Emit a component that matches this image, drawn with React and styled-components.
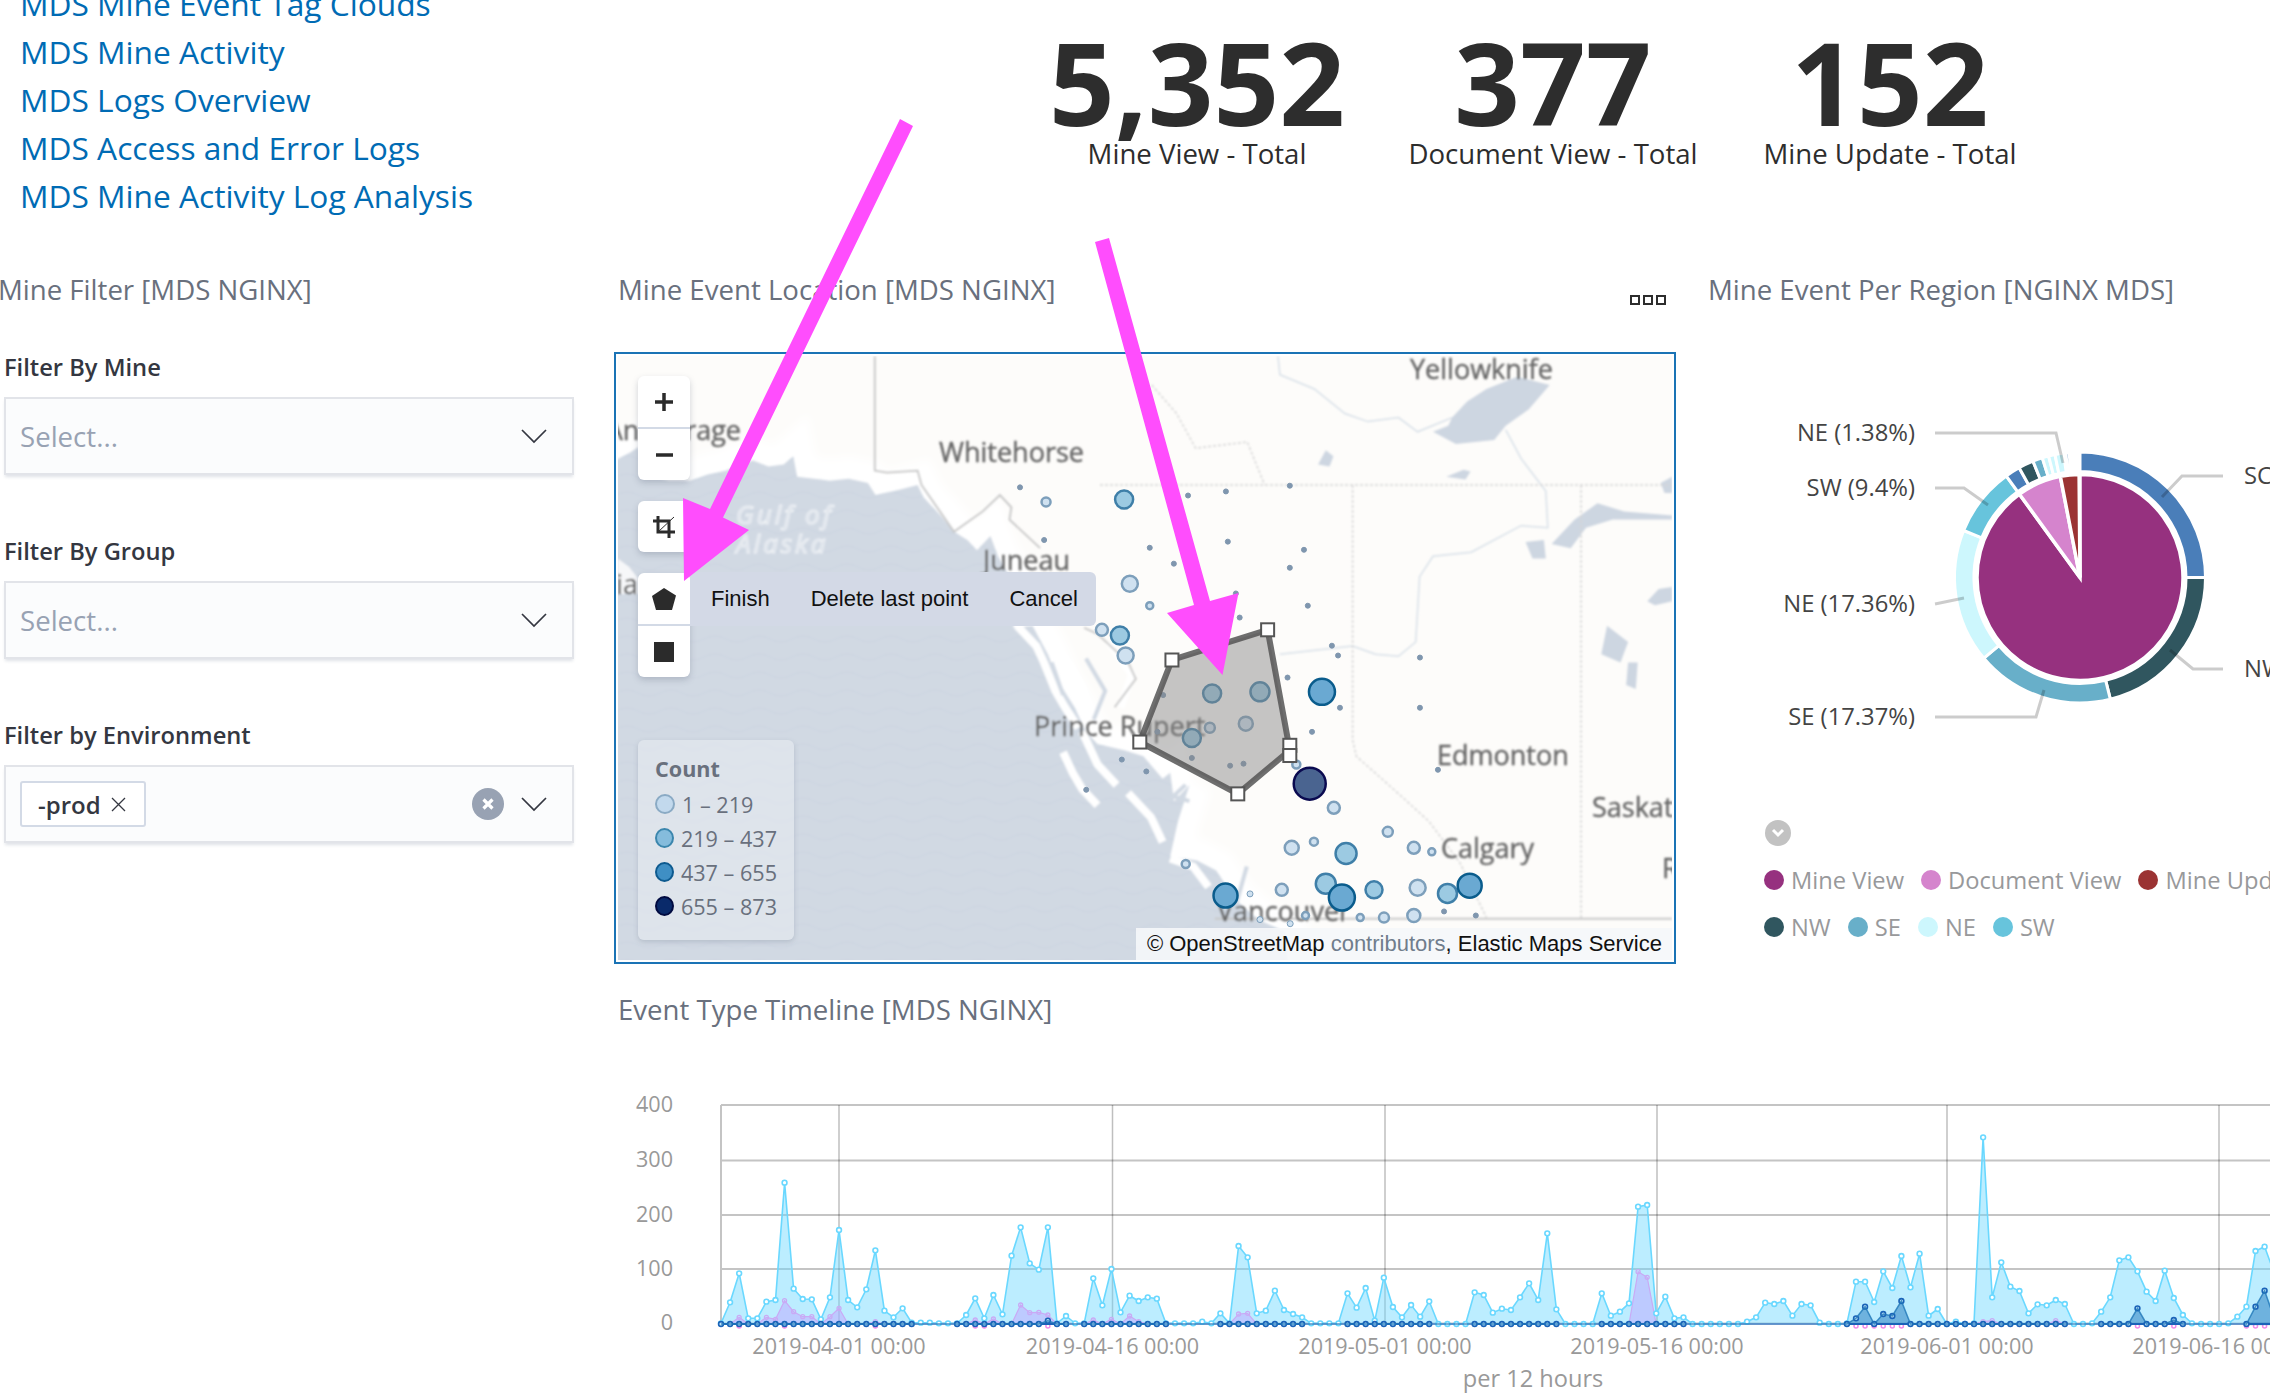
import React from 'react';
import styled, { createGlobalStyle } from 'styled-components';

const GlobalStyle = createGlobalStyle`
	html, body {
		margin: 0;
		padding: 0;
		background: #fff;
		font-family: "Open Sans", sans-serif;
	}
`;

const Page = styled.div`
	position: relative;
	width: 2270px;
	height: 1396px;
	overflow: hidden;
	background: #fff;
`;

const TopRow = styled.div`
	display: grid;
	grid-template-columns: 1020px 354px 358px 316px;
	height: 270px;
`;
const Links = styled.div`
	margin-top: -20px;
	padding-left: 20px;
`;
const DashLink = styled.a`
	display: block;
	font-size: 31.7px;
	line-height: 48px;
	color: #006bb4;
`;
const Metric = styled.div`
	padding-top: 32px;
	text-align: center;
	color: #2d2d2d;
`;
const MetricValue = styled.div`
	font-size: 115px;
	line-height: 100px;
	font-weight: 700;
`;
const MetricLabel = styled.div`
	margin-top: 1px;
	font-size: 27.6px;
	line-height: 40px;
`;

const Body = styled.div`
	display: grid;
	grid-template-columns: 614px 1656px;
`;
const PanelTitle = styled.div`
	font-size: 27.6px;
	line-height: 38px;
	color: #69707d;
	white-space: nowrap;
`;
const TitleRow = styled.div`
	display: flex;
	justify-content: space-between;
	height: 82px;
	padding-left: ${p => p.$indent || 0}px;
	padding-right: 10px;
	box-sizing: border-box;
`;
const FilterColumn = styled.div`
	padding-left: 4px;
`;
const FilterTitle = styled(PanelTitle)`
	margin-left: -6px;
	height: 82px;
`;
const FilterBlock = styled.div`
	margin-bottom: 61px;
`;
const FilterLabel = styled.div`
	margin-bottom: 15px;
	font-size: 23.7px;
	line-height: 30px;
	font-weight: 600;
	color: #343741;
`;
const SelectBox = styled.div`
	display: flex;
	align-items: center;
	width: 570px;
	height: 78px;
	padding: 0 25px 0 14px;
	box-sizing: border-box;
	background: #fbfcfd;
	border: 2px solid #e2e4e9;
	box-shadow: 0 3px 3px -1px rgba(152, 162, 179, 0.3);
`;
const Placeholder = styled.div`
	flex: 1;
	font-size: 27.6px;
	color: #98a2b3;
`;
const TagWrap = styled.div`
	flex: 1;
`;
const Tag = styled.div`
	display: inline-flex;
	align-items: center;
	gap: 10px;
	height: 46px;
	padding: 0 18px 0 16px;
	box-sizing: border-box;
	background: #fff;
	border: 2px solid #d3dae6;
	border-radius: 3px;
	font-size: 24px;
	font-weight: 600;
	color: #343741;
`;
const ClearButton = styled.div`
	display: flex;
	align-items: center;
	justify-content: center;
	width: 32px;
	height: 32px;
	margin-right: 17px;
	border-radius: 50%;
	background: #98a2b3;
`;

const MainColumn = styled.div`
	width: 1656px;
`;
const UpperPanels = styled.div`
	display: flex;
`;
const MapPanel = styled.div`
	width: 1062px;
`;
const MoreDots = styled.div`
	display: flex;
	gap: 3px;
	margin-top: 25px;
	height: 9px;
`;
const MoreDot = styled.span`
	width: 6px;
	height: 6px;
	border: 2px solid #2d2d2d;
`;
const MapFrame = styled.div`
	position: relative;
	width: 1062px;
	height: 612px;
	padding: 2px;
	box-sizing: border-box;
	border: 2px solid #1a73b5;
	background: #fff;
	overflow: hidden;
`;
const MapSvg = styled.svg`
	display: block;
	width: 1054px;
	height: 604px;
	background: #fdfcfa;
`;
const MapLabel = styled.text`
	font-family: "Open Sans", sans-serif;
	font-size: 27px;
	fill: #666;
	stroke: #666;
	stroke-width: 0.4px;
`;
const SeaLabel = styled.text`
	font-family: "Open Sans", sans-serif;
	font-size: 26px;
	font-style: italic;
	letter-spacing: 3px;
	fill: #d0d8e3;
	stroke: #eef1f5;
	stroke-width: 1.2px;
`;
const Tools = styled.div`
	position: absolute;
	top: 22px;
	left: 22px;
	display: flex;
	flex-direction: column;
	gap: 21px;
`;
const ToolGroup = styled.div`
	position: relative;
	display: flex;
	flex-direction: column;
	width: 52px;
	border-radius: 6px;
	background: #fff;
	box-shadow: 0 3px 6px rgba(100, 110, 130, 0.3);
`;
const ToolButton = styled.div`
	display: flex;
	align-items: center;
	justify-content: center;
	height: 51px;
	color: #2b2b2b;
	& + & {
		border-top: 2px solid #d3dae6;
	}
`;
const DrawActions = styled.div`
	position: absolute;
	top: -1px;
	left: 52px;
	display: flex;
	align-items: center;
	width: 406px;
	height: 54px;
	box-sizing: border-box;
	padding-left: 21px;
	gap: 41px;
	background: #d3d9e6;
	border-radius: 0 6px 6px 0;
	font-family: "Liberation Sans", Arial, sans-serif;
	font-size: 22px;
	color: #111;
	white-space: nowrap;
`;
const MapLegend = styled.div`
	position: absolute;
	left: 22px;
	bottom: 22px;
	width: 156px;
	height: 200px;
	padding: 14px 17px;
	box-sizing: border-box;
	background: rgba(226, 231, 238, 0.75);
	border-radius: 6px;
	box-shadow: 0 2px 5px rgba(100, 110, 130, 0.25);
	font-size: 21.6px;
	color: #69707d;
`;
const MapLegendTitle = styled.div`
	font-weight: 700;
	line-height: 30px;
	margin-bottom: 3px;
`;
const MapLegendRow = styled.div`
	display: flex;
	align-items: center;
	gap: 7px;
	height: 34px;
	white-space: nowrap;
`;
const MapLegendDot = styled.span`
	width: 20px;
	height: 20px;
	box-sizing: border-box;
	border-radius: 50%;
	border: 2px solid ${p => p.$line};
	background: ${p => p.$fill};
`;
const Attribution = styled.div`
	position: absolute;
	right: 2px;
	bottom: 2px;
	padding: 0 10px 0 11px;
	height: 32px;
	line-height: 32px;
	background: rgba(245, 247, 250, 0.9);
	font-family: "Liberation Sans", Arial, sans-serif;
	font-size: 22px;
	color: #111;
	white-space: nowrap;
`;
const AttributionLink = styled.span`
	color: #707d8c;
`;

const RegionPanel = styled.div`
	width: 594px;
`;
const ChartSvg = styled.svg`
	display: block;
	overflow: hidden;
`;
const ChartText = styled.text`
	font-family: "Open Sans", sans-serif;
	font-size: ${p => p.$size || 21.6}px;
	fill: ${p => p.$color || '#444'};
`;
const LegendToggle = styled.div`
	display: flex;
	align-items: center;
	justify-content: center;
	width: 26px;
	height: 26px;
	margin: 20px 0 10px 89px;
	border-radius: 50%;
	background: #c2c2c2;
`;
const LegendRow = styled.div`
	display: flex;
	align-items: center;
	gap: 17px;
	height: 47px;
	padding-left: 88px;
	white-space: nowrap;
	font-size: 23.7px;
	color: #98999b;
`;
const LegendItem = styled.div`
	display: flex;
	align-items: center;
	gap: 7px;
`;
const LegendDot = styled.span`
	width: 20px;
	height: 20px;
	border-radius: 50%;
	background: ${p => p.$color};
`;

const TimelineTitle = styled(PanelTitle)`
	margin: 26px 0 32px 4px;
`;
const TimelineSvg = styled.svg`
	display: block;
	margin-left: 4px;
`;
const ArrowLayer = styled.svg`
	position: absolute;
	top: 0;
	left: 0;
	pointer-events: none;
`;

// map shapes are read off the crops, so they go through the same scale
const fromCrop = (originX) => ([x, y]) => [originX + x / 2.613, 340 + y / 2.45];
const west = fromCrop(600);
const east = fromCrop(1100);
const line = (points, toPage = west) => points.map((p) => toPage(p).map((n) => n.toFixed(1)).join(',')).join(' ');

const WATER = '#d1d9e3';

const coast = [
	[30, 300], [60, 285], [80, 275], [100, 262], [120, 330], [180, 345], [235, 345], [280, 330], [330, 320], [365, 305], [400, 295], [440, 310],
	[480, 305], [505, 285], [515, 335], [560, 340], [600, 345], [650, 340], [700, 350], [720, 380], [760, 372], [790, 365], [830, 355], [845, 385],
	[860, 400], [890, 430], [925, 470], [960, 490], [985, 515], [1020, 480], [1040, 530], [1065, 570],
	[1090, 600], [1080, 705], [1130, 700], [1170, 770], [1200, 840], [1240, 900], [1270, 960], [1300, 990], [1370, 1005], [1420, 1020],
	[1470, 1075], [1490, 1060], [1500, 1130], [1540, 1090], [1510, 1180], [1490, 1265], [1560, 1275], [1610, 1300], [1660, 1370],
	[1720, 1420], [1790, 1450], [1800, 1560], [30, 1560],
];
const islands = [
	[[1090, 700], [1140, 750], [1160, 790], [1190, 860], [1215, 900], [1250, 950]],
	[[1200, 760], [1230, 800], [1260, 850], [1290, 930]],
	[[1210, 1010], [1235, 1060], [1260, 1100], [1300, 1140]],
	[[1490, 1270], [1550, 1290], [1590, 1340]],
	[[1330, 740], [1390, 820], [1360, 900]],
	[[1260, 960], [1300, 1040], [1350, 1090]],
	[[1380, 1110], [1440, 1170], [1470, 1230]],
];
const channels = [
	[[1270, 780], [1320, 860], [1290, 930]],
	[[1180, 790], [1210, 870]],
	[[1410, 1090], [1470, 1110], [1540, 1130]],
	[[1690, 1290], [1660, 1390]],
	[[1530, 1090], [1450, 1160]],
];
const kodiak = [[46, 535], [75, 555], [100, 585], [100, 622], [46, 622]];
const lakes = [
	[[920, 190], [960, 150], [1010, 120], [1090, 90], [1175, 110], [1120, 170], [1060, 210], [1030, 245], [930, 255], [870, 225], [910, 210]],
	[[1180, 500], [1240, 440], [1300, 400], [1370, 420], [1495, 430], [1495, 440], [1340, 440], [1270, 460], [1230, 510]],
	[[1112, 495], [1160, 490], [1165, 535], [1130, 535]],
	[[570, 305], [590, 270], [610, 285], [600, 310]],
	[[905, 335], [950, 318], [968, 322], [955, 342]],
	[[1430, 640], [1460, 610], [1495, 605], [1495, 640], [1450, 650]],
	[[1325, 700], [1380, 740], [1360, 790], [1310, 770]],
	[[1380, 790], [1405, 790], [1400, 855], [1375, 845]],
	[[1465, 350], [1495, 335], [1495, 375], [1475, 375]],
];
const rivers = [
	[[465, 40], [470, 85], [560, 120], [640, 180], [700, 200], [780, 190], [830, 225], [920, 190]],
	[[1060, 220], [1100, 290], [1165, 370], [1170, 460], [1100, 455], [970, 520], [870, 530], [835, 580], [825, 740], [780, 775], [720, 770], [660, 750], [470, 770]],
];
const provinceLines = [
	[[0, 355], [1495, 355]],
	[[660, 355], [660, 980], [670, 1020], [730, 1070], [790, 1120], [860, 1180], [940, 1280], [1010, 1415]],
	[[1257, 355], [1257, 1418]],
	[[135, 110], [200, 180], [250, 265], [385, 250], [430, 355]],
];
const alaskaBorder = [
	[718, 40], [718, 320], [750, 325], [830, 320], [840, 355], [925, 470], [1000, 420], [1045, 380], [1075, 410], [1070, 440], [1150, 510],
];
const panhandle = [[1265, 705], [1300, 720], [1380, 790], [1400, 830], [1345, 900]];

const tiny = { r: 2.5, fill: '#7f96ae', stroke: '#7f96ae' };
const pale = { fill: '#cfe1f0', stroke: '#7d9fbb' };
const mid = { fill: '#9ccae2', stroke: '#3f7fa8' };
const strong = { fill: '#6aa9d2', stroke: '#0a5c8c' };
const bubbles = [
	...[[-1306 + 1097, 361], [230, 381], [329, 371], [496, 357], [130, 509], [334, 494], [533, 514], [193, 548], [496, 558], [355, 621], [365, 680],
		[606, 749], [836, 778], [836, 901], [627, 901], [554, 960], [883, 1053], [899, 1400], [982, 1410], [-146, 490], [57, 1028], [121, 1057], [-36, 1102],
		[165, 870], [240, 1024], [340, 1043], [375, 1038], [150, 960], [490, 827], [622, 773], [543, 651]].map(([x, y]) => ({ x, y, ...tiny })),
	...[[-141, 397, 4.5], [130, 651, 3.5], [611, 1146, 6], [752, 1205, 5], [820, 1244, 6], [867, 1254, 3.5], [501, 1244, 7], [559, 1229, 4], [224, 1284, 4],
		[392, 1357, 3], [475, 1347, 6], [742, 1415, 5], [820, 1410, 6.5], [680, 1415, 3.5], [537, 1410, 3.5], [497, 1430, 3], [418, 1420, 3], [513, 1040, 4],
		[78, 597, 8], [67, 773, 8], [5, 710, 6], [287, 950, 5], [381, 940, 7], [830, 1342, 8]].map(([x, y, r]) => ({ x, y, r, ...pale })),
	...[[63, 391, 9], [52, 724, 9], [293, 866, 9], [418, 862, 9.5], [240, 975, 9], [643, 1258, 10.5], [590, 1332, 10], [716, 1347, 8.5], [908, 1356, 9.5]].map(([x, y, r]) => ({ x, y, r, ...mid })),
	...[[580, 862, 13], [328, 1361, 12], [632, 1366, 13], [966, 1337, 12]].map(([x, y, r]) => ({ x, y, r, ...strong })),
	{ x: 548, y: 1087, r: 16, fill: '#4a6490', stroke: '#0a0a50' },
];
const drawnShape = [[104, 985], [188, 784], [438, 710], [496, 1005], [360, 1112]];
const handles = [[104, 985], [188, 784], [438, 710], [496, 993], [496, 1018], [360, 1112]];

const mapLabels = [
	['Yellowknife', 1410, 379],
	['Whitehorse', 939, 462],
	['Juneau', 983, 570],
	['Prince Rupert', 1034, 736],
	['Edmonton', 1437, 765],
	['Saskatoon', 1592, 817],
	['Calgary', 1441, 858],
	['Regina', 1662, 878],
	['Vancouver', 1217, 921],
];

const ARROW_COLOR = '#ff4dfd';

const polar = (cx, cy, r, deg) => {
	const a = (deg - 90) * Math.PI / 180;
	return [cx + r * Math.cos(a), cy + r * Math.sin(a)];
};
const slice = (r0, r1, from, to) => {
	const [cx, cy] = [2080, 577.5];
	const large = to - from > 180 ? 1 : 0;
	const [ax, ay] = polar(cx, cy, r1, from);
	const [bx, by] = polar(cx, cy, r1, to);
	if (!r0) return `M${cx} ${cy} L${ax} ${ay} A${r1} ${r1} 0 ${large} 1 ${bx} ${by} Z`;
	const [dx, dy] = polar(cx, cy, r0, to);
	const [ex, ey] = polar(cx, cy, r0, from);
	return `M${ax} ${ay} A${r1} ${r1} 0 ${large} 1 ${bx} ${by} L${dx} ${dy} A${r0} ${r0} 0 ${large} 0 ${ex} ${ey} Z`;
};
const innerSlices = [
	[0, 324, '#96317f'],
	[324, 349, '#d584cd'],
	[349, 359.5, '#9b3333'],
];
const outerSlices = [
	[0, 90, '#4a7eb9'],
	[90, 166, '#30565f'],
	[166, 230, '#68afc9'],
	[230, 292, '#cdf7fd'],
	[292, 324, '#67c4dc'],
	[324, 331, '#4a7eb9'],
	[331, 338, '#30565f'],
	[338, 342.5, '#68afc9'],
	[342.5, 345.5, '#cdf7fd'],
	[345.5, 348.5, '#cdf7fd'],
	[348.5, 352.5, '#cdf7fd'],
	[353.5, 355, '#4a7eb9'],
];
const leaders = [
	{ text: 'NE (1.38%)', y: 433, points: '1935,433 2056,433 2063,463' },
	{ text: 'SW (9.4%)', y: 488, points: '1935,488 1964,488 1988,505' },
	{ text: 'NE (17.36%)', y: 604, points: '1935,604 1964,598' },
	{ text: 'SE (17.37%)', y: 717, points: '1935,717 2036,717 2044,690' },
];
const leadersRight = [
	{ text: 'SC (26.37%)', y: 476, points: '2223,476 2182,476 2162,497' },
	{ text: 'NW (20.21%)', y: 669, points: '2223,669 2193,669 2170,650' },
];

// rows on the crop, one per 12 hour bucket
const lightRows = [
	790, 727, 640, 775, 775, 725, 720, 368, 686, 717, 718, 778, 712, 510, 720, 742, 688, 571, 752, 772, 745, 788,
	788, 788, 790, 790, 790, 765, 715, 775, 705, 763, 587, 502, 610, 629, 502, 790, 768, 790, 790, 655, 736, 627,
	757, 707, 723, 712, 716, 790, 790, 790, 790, 785, 790, 760, 790, 558, 592, 760, 752, 692, 750, 762, 772, 790,
	790, 790, 790, 700, 743, 684, 782, 653, 741, 772, 735, 770, 724, 792, 792, 792, 792, 697, 705, 758, 746, 750,
	712, 670, 720, 520, 748, 792, 792, 792, 792, 700, 767, 755, 730, 440, 435, 760, 710, 775, 772, 792, 792, 792,
	792, 792, 792, 785, 772, 728, 732, 723, 767, 732, 736, 788, 792, 792, 790, 665, 665, 726, 634, 684, 588, 682,
	581, 767, 747, 792, 785, 792, 790, 232, 712, 607, 680, 693, 760, 733, 736, 720, 732, 792, 792, 790, 755, 712,
	601, 592, 634, 695, 723, 632, 714, 765, 790, 792, 792, 792, 790, 770, 740, 573, 560, 635,
];
const purpleRows = {
	2: 772, 5: 772, 6: 778, 7: 722, 8: 755, 9: 770, 10: 770, 12: 770, 13: 745, 17: 785, 28: 780, 30: 777, 33: 735, 34: 758,
	35: 757, 36: 765, 41: 780, 43: 778, 45: 768, 46: 785, 57: 762, 58: 760, 101: 635, 102: 652, 139: 785, 140: 782, 147: 782,
};
const blueRows = { 36: 782, 125: 775, 126: 740, 128: 762, 129: 768, 130: 723, 156: 745, 160: 780, 169: 740, 170: 692, 171: 770 };
const activeRanges = [[0, 21], [26, 38], [40, 49], [55, 64], [69, 78], [83, 92], [97, 106], [124, 148], [152, 161], [168, 171]];
const pinkBuckets = [2, 7, 17, 28, 29, 36, 125, 126, 127, 128, 129, 130, 156, 160, 168, 169, 170, 171];

const BASE_ROW = 792;
const bucketX = (i) => 721 + i * 9.08;
const rowY = (row) => 1060 + row / 3;
const isActive = (i) => activeRanges.some(([a, b]) => i >= a && i <= b);

const seriesPoints = (rowAt) => lightRows.map((_, i) => `${bucketX(i).toFixed(1)},${rowY(rowAt(i)).toFixed(1)}`).join(' ');
const areaOf = (rowAt) => `${bucketX(0)},${rowY(BASE_ROW)} ${seriesPoints(rowAt)} ${bucketX(lightRows.length - 1)},${rowY(BASE_ROW)}`;

const yTicks = [['400', 1105], ['300', 1160.5], ['200', 1215], ['100', 1269], ['0', 1323.5]];
const xTicks = [
	['2019-04-01 00:00', 839],
	['2019-04-16 00:00', 1112.5],
	['2019-05-01 00:00', 1385],
	['2019-05-16 00:00', 1657],
	['2019-06-01 00:00', 1947],
	['2019-06-16 00:00', 2219],
];

const Chevron = () => (
	<svg width="26" height="15" viewBox="0 0 26 15" fill="none" stroke="#343741" strokeWidth="1.7">
		<polyline points="1,1 13,13 25,1" />
	</svg>
);

const Select = ({ children }) => (
	<SelectBox>
		{children}
		<Chevron />
	</SelectBox>
);

const MapDrawing = () => (
	<MapSvg viewBox="618 356 1054 604">
		<defs>
			<pattern id="waves" width="44" height="18" patternUnits="userSpaceOnUse">
				<path d="M0 9 Q11 3 22 9 T44 9" fill="none" stroke="#c4cedb" strokeWidth="1" opacity="0.45" />
			</pattern>
			<filter id="soft"><feGaussianBlur stdDeviation="0.8" /></filter>
			<filter id="softer"><feGaussianBlur stdDeviation="4" /></filter>
		</defs>
		<polygon points={line(coast)} fill="#fff" stroke="#fff" strokeWidth="44" filter="url(#softer)" />
		<g filter="url(#soft)">
			{rivers.map((r, i) => (
				<polyline key={i} points={line(r, east)} fill="none" stroke="#d8e0e8" strokeWidth="1.5" />
			))}
			{lakes.map((l, i) => (
				<polygon key={i} points={line(l, east)} fill="#cdd6e1" />
			))}
			<polygon points={line(coast)} fill={WATER} />
			<polygon points={line(coast)} fill="url(#waves)" />
			<polygon points={line(kodiak)} fill="#f6f7f9" />
			{islands.map((s, i) => (
				<polyline key={i} points={line(s)} fill="none" stroke="#fff" strokeWidth="8" />
			))}
			{channels.map((s, i) => (
				<polyline key={i} points={line(s)} fill="none" stroke={WATER} strokeWidth="4" />
			))}
			{provinceLines.map((b, i) => (
				<polyline key={i} points={line(b, east)} fill="none" stroke="#d5d5d5" strokeWidth="1.5" strokeDasharray="3 2" />
			))}
			<polyline points={line([[300, 1418], [1495, 1418]], east)} fill="none" stroke="#c8c8c8" strokeWidth="2" />
			<polyline points={line(alaskaBorder)} fill="none" stroke="#c5c5c5" strokeWidth="1.8" />
			<polyline points={line(panhandle)} fill="none" stroke="#c5c5c5" strokeWidth="1.8" />
			<MapLabel x={741} y={440} textAnchor="end">Anchorage</MapLabel>
			<MapLabel x={638} y={594} textAnchor="end">lia</MapLabel>
			<SeaLabel x={736} y={524}>Gulf of</SeaLabel>
			<SeaLabel x={736} y={553}>Alaska</SeaLabel>
			{mapLabels.map(([text, x, y]) => (
				<MapLabel key={text} x={x} y={y}>{text}</MapLabel>
			))}
		</g>
		{bubbles.map((b, i) => {
			const [x, y] = east([b.x, b.y]);
			return <circle key={i} cx={x} cy={y} r={b.r} fill={b.fill} stroke={b.stroke} strokeWidth={b.r > 3 ? 2.5 : 1} />;
		})}
		<polygon points={line(drawnShape, east)} fill="rgba(135,135,135,0.48)" stroke="rgba(85,85,85,0.85)" strokeWidth="6" />
		{handles.map((h, i) => {
			const [x, y] = east(h);
			return <rect key={i} x={x - 6.5} y={y - 6.5} width="13" height="13" fill="#fff" stroke="#555" strokeWidth="2" />;
		})}
	</MapSvg>
);

const RegionChart = () => (
	<ChartSvg width="594" height="448" viewBox="1676 352 594 448">
		{innerSlices.map(([from, to, color]) => (
			<path key={from} d={slice(0, 103, from, to)} fill={color} stroke="#fff" strokeWidth="3.5" />
		))}
		{outerSlices.map(([from, to, color]) => (
			<path key={from} d={slice(106, 125.5, from, to)} fill={color} stroke="#fff" strokeWidth="3" />
		))}
		{[...leaders, ...leadersRight].map((l) => (
			<polyline key={l.text} points={l.points} fill="none" stroke="rgba(0,0,0,0.2)" strokeWidth="3" />
		))}
		{leaders.map((l) => (
			<ChartText key={l.text} x={1915} y={l.y + 8} textAnchor="end" $size={23.8}>{l.text}</ChartText>
		))}
		{leadersRight.map((l) => (
			<ChartText key={l.text} x={2244} y={l.y + 8} $size={23.8}>{l.text}</ChartText>
		))}
	</ChartSvg>
);

const Timeline = () => (
	<TimelineSvg width="1652" height="336" viewBox="618 1060 1652 336">
		<line x1="721" y1="1105" x2="721" y2="1323.5" stroke="#c4c4c4" strokeWidth="2" />
		{yTicks.map(([label, y]) => (
			<g key={label}>
				<line x1="721" y1={y} x2="2270" y2={y} stroke="#c4c4c4" strokeWidth="2" />
				<ChartText x={673} y={y + 6.5} textAnchor="end" $color="#999">{label}</ChartText>
			</g>
		))}
		{xTicks.map(([label, x]) => (
			<g key={label}>
				<line x1={x} y1="1105" x2={x} y2="1323.5" stroke="rgba(0,0,0,0.25)" strokeWidth="1.5" />
				<ChartText x={x} y={1354} textAnchor="middle" $color="#999">{label}</ChartText>
			</g>
		))}
		<ChartText x={1533} y={1387} textAnchor="middle" $color="#999" $size={23.6}>per 12 hours</ChartText>

		<polygon points={areaOf((i) => lightRows[i])} fill="rgba(110,215,255,0.46)" />
		<polyline points={seriesPoints((i) => lightRows[i])} fill="none" stroke="#6ad8ff" strokeWidth="1.6" />
		<polygon points={areaOf((i) => purpleRows[i] || BASE_ROW)} fill="rgba(190,160,255,0.45)" />
		<polyline points={seriesPoints((i) => purpleRows[i] || BASE_ROW)} fill="none" stroke="#c9aaf5" strokeWidth="1.2" />
		<polygon points={areaOf((i) => blueRows[i] || BASE_ROW)} fill="rgba(31,119,190,0.5)" />
		{lightRows.map((row, i) => (
			<circle key={i} cx={bucketX(i)} cy={rowY(row)} r="2.4" fill="#fff" stroke="#6ad8ff" strokeWidth="1.6" />
		))}
		{Object.entries(purpleRows).map(([i, row]) => (
			<circle key={i} cx={bucketX(+i)} cy={rowY(row)} r="2" fill="none" stroke="#c9aaf5" strokeWidth="1.3" />
		))}
		{pinkBuckets.map((i) => (
			<circle key={i} cx={bucketX(i)} cy={rowY(BASE_ROW) + 2} r="2" fill="none" stroke="#f08ce8" strokeWidth="1.5" />
		))}
		{activeRanges.map(([a, b]) => (
			<line key={a} x1={bucketX(a)} y1={rowY(BASE_ROW)} x2={bucketX(b)} y2={rowY(BASE_ROW)} stroke="#1a63b8" strokeWidth="2.2" />
		))}
		{lightRows.map((_, i) => isActive(i) && (
			<circle key={i} cx={bucketX(i)} cy={rowY(blueRows[i] || BASE_ROW)} r="2.4" fill="#bfe4f8" stroke="#1a63b8" strokeWidth="1.6" />
		))}
		<polyline points={seriesPoints((i) => blueRows[i] || BASE_ROW)} fill="none" stroke="#1f77b8" strokeWidth="1.5" opacity="0.8" />
	</TimelineSvg>
);

const App = () => (
	<Page>
		<GlobalStyle />
		<TopRow>
			<Links>
				{['MDS Mine Event Tag Clouds', 'MDS Mine Activity', 'MDS Logs Overview', 'MDS Access and Error Logs', 'MDS Mine Activity Log Analysis'].map((name) => (
					<DashLink key={name}>{name}</DashLink>
				))}
			</Links>
			<Metric>
				<MetricValue>5,352</MetricValue>
				<MetricLabel>Mine View - Total</MetricLabel>
			</Metric>
			<Metric>
				<MetricValue>377</MetricValue>
				<MetricLabel>Document View - Total</MetricLabel>
			</Metric>
			<Metric>
				<MetricValue>152</MetricValue>
				<MetricLabel>Mine Update - Total</MetricLabel>
			</Metric>
		</TopRow>

		<Body>
			<FilterColumn>
				<FilterTitle>Mine Filter [MDS NGINX]</FilterTitle>
				<FilterBlock>
					<FilterLabel>Filter By Mine</FilterLabel>
					<Select><Placeholder>Select...</Placeholder></Select>
				</FilterBlock>
				<FilterBlock>
					<FilterLabel>Filter By Group</FilterLabel>
					<Select><Placeholder>Select...</Placeholder></Select>
				</FilterBlock>
				<FilterBlock>
					<FilterLabel>Filter by Environment</FilterLabel>
					<Select>
						<TagWrap>
							<Tag>
								-prod
								<svg width="15" height="15" viewBox="0 0 15 15" stroke="#343741" strokeWidth="1.3"><path d="M1 1l13 13M14 1L1 14" /></svg>
							</Tag>
						</TagWrap>
						<ClearButton>
							<svg width="12" height="12" viewBox="0 0 12 12" stroke="#fff" strokeWidth="3.2"><path d="M1.5 1.5l9 9M10.5 1.5l-9 9" /></svg>
						</ClearButton>
					</Select>
				</FilterBlock>
			</FilterColumn>

			<MainColumn>
				<UpperPanels>
					<MapPanel>
						<TitleRow $indent={4}>
							<PanelTitle>Mine Event Location [MDS NGINX]</PanelTitle>
							<MoreDots><MoreDot /><MoreDot /><MoreDot /></MoreDots>
						</TitleRow>
						<MapFrame>
							<MapDrawing />
							<Tools>
								<ToolGroup>
									<ToolButton>
										<svg width="22" height="22" viewBox="0 0 22 22" stroke="currentColor" strokeWidth="3.5"><path d="M11 2v18M2 11h18" /></svg>
									</ToolButton>
									<ToolButton>
										<svg width="22" height="22" viewBox="0 0 22 22" stroke="currentColor" strokeWidth="3.5"><path d="M3 11h17" /></svg>
									</ToolButton>
								</ToolGroup>
								<ToolGroup>
									<ToolButton>
										<svg width="24" height="24" viewBox="0 0 24 24" fill="none" stroke="currentColor" strokeWidth="3"><path d="M6 1v16h17M1 6h16v17" /><path d="M6 17L22 2" strokeWidth="1" /></svg>
									</ToolButton>
								</ToolGroup>
								<ToolGroup>
									<ToolButton>
										<svg width="26" height="24" viewBox="0 0 26 24" fill="currentColor"><path d="M13 1L25 8.5 21 23 5 23 1 9z" /></svg>
									</ToolButton>
									<ToolButton>
										<svg width="20" height="20" viewBox="0 0 20 20" fill="currentColor"><rect width="20" height="20" /></svg>
									</ToolButton>
									<DrawActions>
										<span>Finish</span>
										<span>Delete last point</span>
										<span>Cancel</span>
									</DrawActions>
								</ToolGroup>
							</Tools>
							<MapLegend>
								<MapLegendTitle>Count</MapLegendTitle>
								<MapLegendRow><MapLegendDot $fill="#c2d9ed" $line="#8aaac4" />1 – 219</MapLegendRow>
								<MapLegendRow><MapLegendDot $fill="#85bcdc" $line="#3b86ad" />219 – 437</MapLegendRow>
								<MapLegendRow><MapLegendDot $fill="#3f8fc4" $line="#0d5a8f" />437 – 655</MapLegendRow>
								<MapLegendRow><MapLegendDot $fill="#0a2a6a" $line="#000a40" />655 – 873</MapLegendRow>
							</MapLegend>
							<Attribution>© OpenStreetMap <AttributionLink>contributors</AttributionLink>, Elastic Maps Service</Attribution>
						</MapFrame>
					</MapPanel>

					<RegionPanel>
						<TitleRow $indent={32}>
							<PanelTitle>Mine Event Per Region [NGINX MDS]</PanelTitle>
						</TitleRow>
						<RegionChart />
						<LegendToggle>
							<svg width="14" height="10" viewBox="0 0 14 10" fill="none" stroke="#fff" strokeWidth="3"><polyline points="2,2 7,7 12,2" /></svg>
						</LegendToggle>
						<LegendRow>
							<LegendItem><LegendDot $color="#96317f" />Mine View</LegendItem>
							<LegendItem><LegendDot $color="#d584cd" />Document View</LegendItem>
							<LegendItem><LegendDot $color="#9b3333" />Mine Update</LegendItem>
						</LegendRow>
						<LegendRow>
							<LegendItem><LegendDot $color="#30565f" />NW</LegendItem>
							<LegendItem><LegendDot $color="#68afc9" />SE</LegendItem>
							<LegendItem><LegendDot $color="#cdf7fd" />NE</LegendItem>
							<LegendItem><LegendDot $color="#67c4dc" />SW</LegendItem>
						</LegendRow>
					</RegionPanel>
				</UpperPanels>

				<TimelineTitle>Event Type Timeline [MDS NGINX]</TimelineTitle>
				<Timeline />
			</MainColumn>
		</Body>

		<ArrowLayer width="2270" height="1396" viewBox="0 0 2270 1396">
			<polygon fill={ARROW_COLOR} points="900,119 913,126 723,517.5 749,530 684,581 683,498 710,509" />
			<polygon fill={ARROW_COLOR} points="1095,242 1109,238 1210,601 1238.5,593 1222.5,675 1167,613 1194,605" />
		</ArrowLayer>
	</Page>
);

export default App;
